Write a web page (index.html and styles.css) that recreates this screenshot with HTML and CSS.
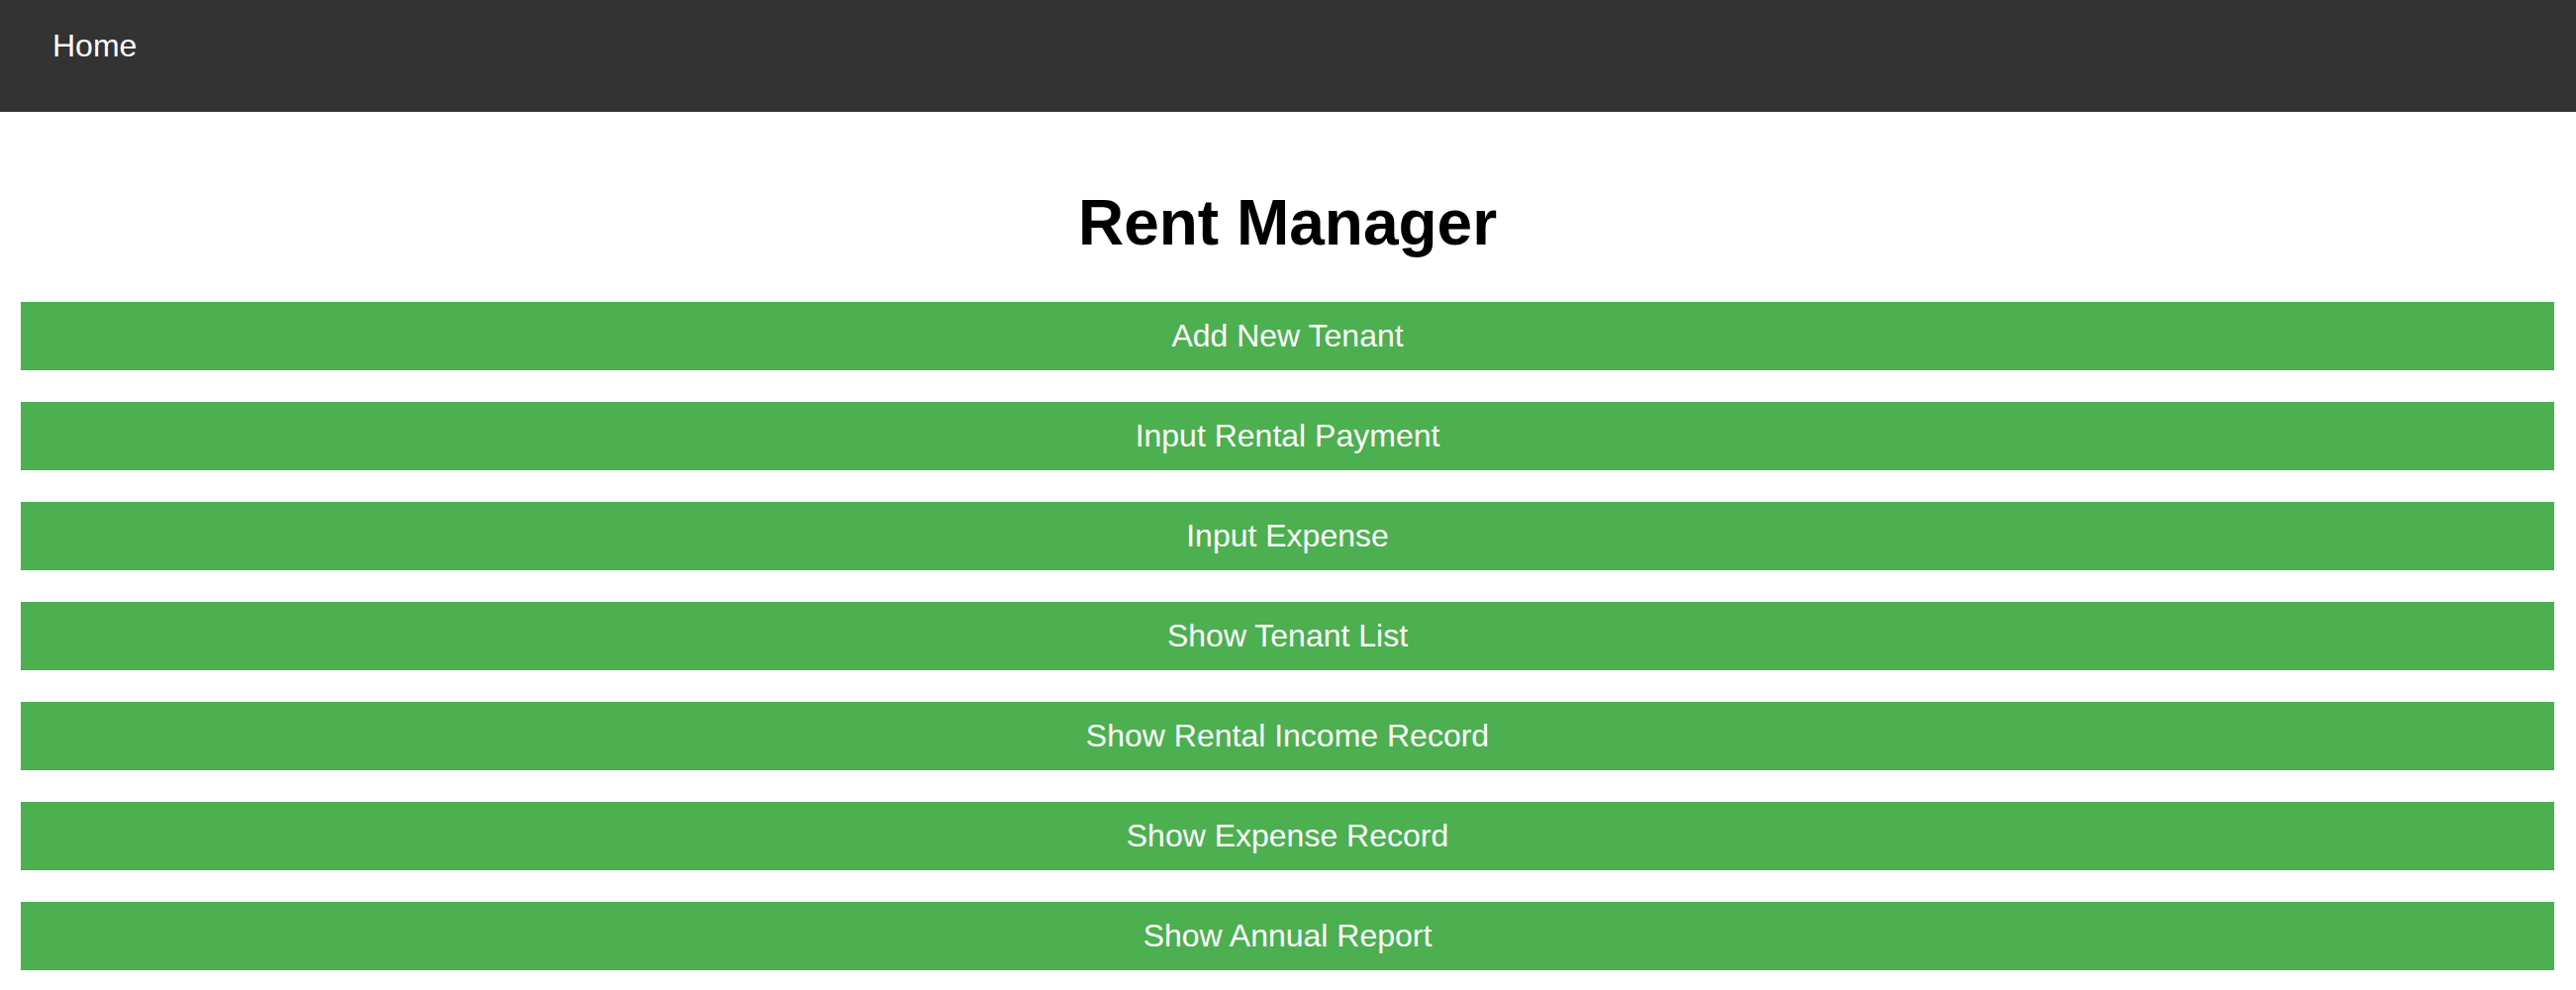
FILE: index.html
```html
<!DOCTYPE html>
<html lang="en">
<head>
<meta charset="utf-8">
<title>Rent Manager</title>
<link rel="stylesheet" href="styles.css">
</head>
<body>
<nav class="topnav">
  <a class="nav-link" href="#">Home</a>
</nav>
<main class="content">
  <h1 class="title">Rent Manager</h1>
  <div class="menu">
    <button class="menu-btn">Add New Tenant</button>
    <button class="menu-btn">Input Rental Payment</button>
    <button class="menu-btn">Input Expense</button>
    <button class="menu-btn">Show Tenant List</button>
    <button class="menu-btn">Show Rental Income Record</button>
    <button class="menu-btn">Show Expense Record</button>
    <button class="menu-btn">Show Annual Report</button>
  </div>
</main>
</body>
</html>
```

FILE: styles.css
```css
html, body {
  margin: 0;
  padding: 0;
  background: #ffffff;
  font-family: "Liberation Sans", Arial, sans-serif;
}

.topnav {
  box-sizing: border-box;
  height: 113px;
  background: #333333;
  padding: 28px 53px 0;
}

.nav-link {
  display: inline-block;
  color: #ffffff;
  text-decoration: none;
  font-size: 32px;
  line-height: 37px;
}

.content {
  padding: 75px 22px 0 21px;
}

.title {
  margin: 0 0 43px;
  text-align: center;
  font-size: 64px;
  font-weight: bold;
  line-height: 74px;
  color: #000000;
}

.menu {
  display: flex;
  flex-direction: column;
  gap: 32px;
}

.menu-btn {
  display: block;
  width: 100%;
  height: 69px;
  margin: 0;
  padding: 0;
  border: none;
  background: #4caf50;
  color: #ffffff;
  font-family: "Liberation Sans", Arial, sans-serif;
  font-size: 32px;
  line-height: 37px;
  text-align: center;
  cursor: pointer;
}
```
